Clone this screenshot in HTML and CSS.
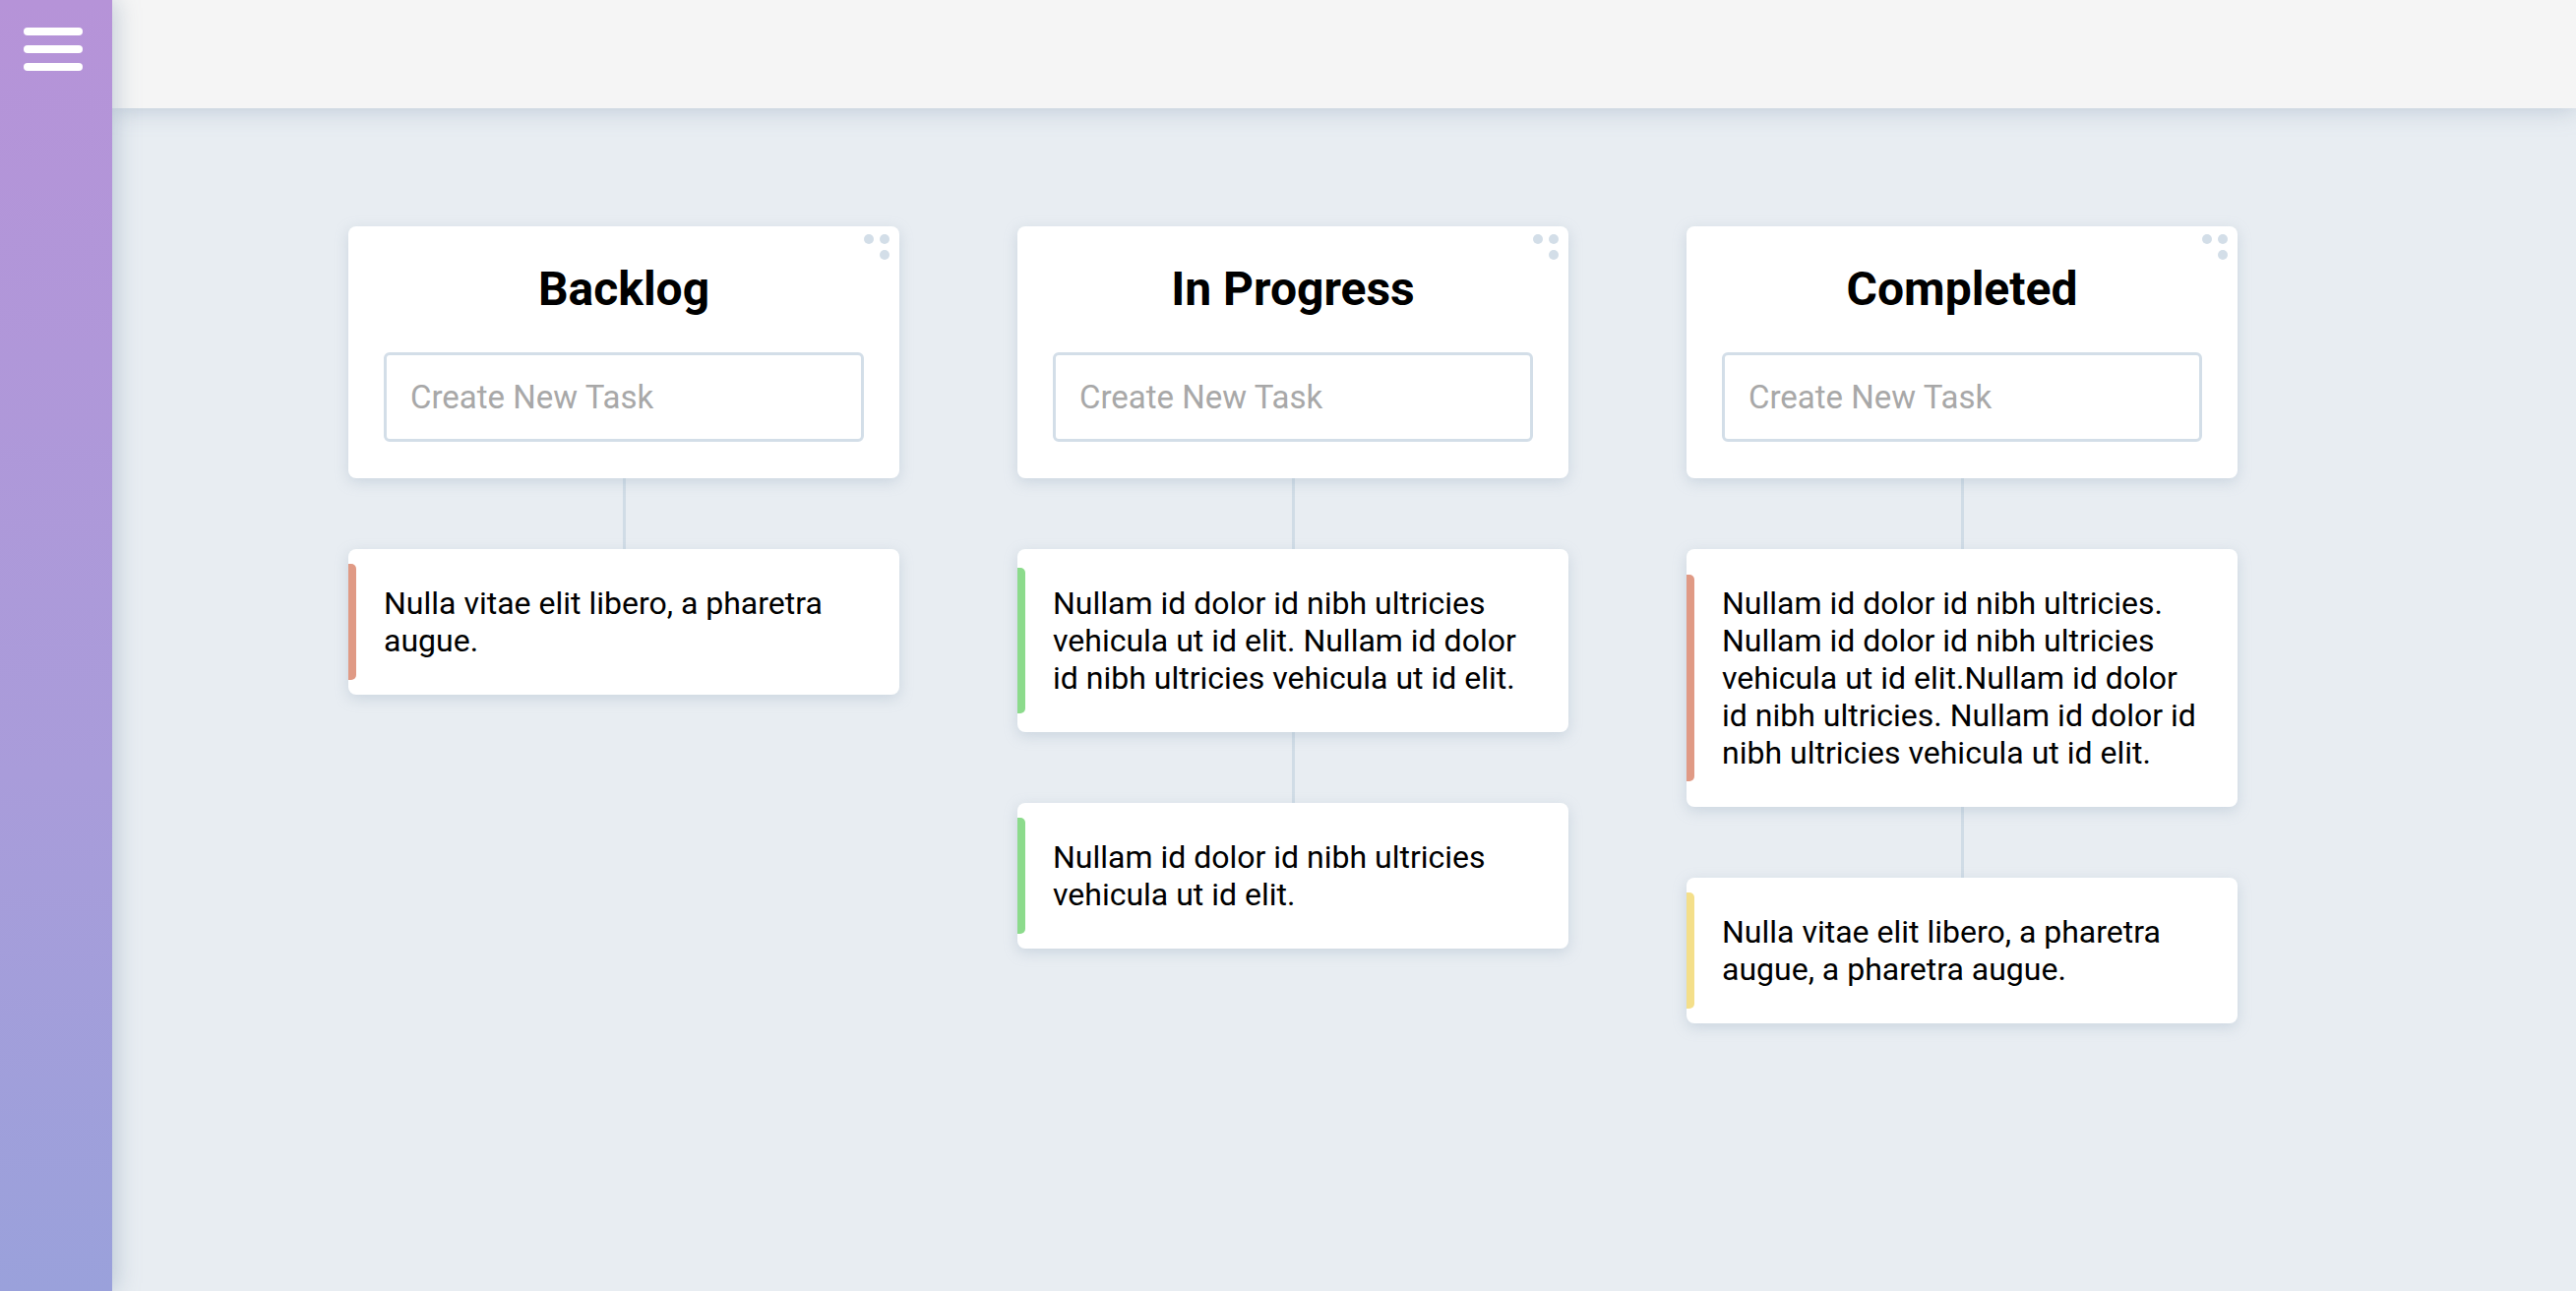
FILE: index.html
```html
<!DOCTYPE html>
<html lang="en">
<head>
<meta charset="utf-8">
<title>Kanban</title>
<link rel="stylesheet" href="styles.css">
</head>
<body>
<div class="app">
  <aside class="sidebar">
    <button class="menu" aria-label="Menu">
      <span class="bar"></span>
      <span class="bar"></span>
      <span class="bar"></span>
    </button>
  </aside>
  <main class="main">
    <header class="topbar"></header>
    <section class="board">
      <div class="column">
        <div class="col-head">
          <svg class="grip" width="26" height="26" viewBox="0 0 26 26"><circle cx="5" cy="5" r="5"/><circle cx="21" cy="5" r="5"/><circle cx="21" cy="21" r="5"/></svg>
          <h2 class="col-title">Backlog</h2>
          <input class="new-task" type="text" placeholder="Create New Task">
        </div>
        <div class="link"></div>
        <div class="task task-red">Nulla vitae elit libero, a pharetra augue.</div>
      </div>
      <div class="column">
        <div class="col-head">
          <svg class="grip" width="26" height="26" viewBox="0 0 26 26"><circle cx="5" cy="5" r="5"/><circle cx="21" cy="5" r="5"/><circle cx="21" cy="21" r="5"/></svg>
          <h2 class="col-title">In Progress</h2>
          <input class="new-task" type="text" placeholder="Create New Task">
        </div>
        <div class="link"></div>
        <div class="task task-green">Nullam id dolor id nibh ultricies vehicula ut id elit. Nullam id dolor id nibh ultricies vehicula ut id elit.</div>
        <div class="link"></div>
        <div class="task task-green">Nullam id dolor id nibh ultricies vehicula ut id elit.</div>
      </div>
      <div class="column">
        <div class="col-head">
          <svg class="grip" width="26" height="26" viewBox="0 0 26 26"><circle cx="5" cy="5" r="5"/><circle cx="21" cy="5" r="5"/><circle cx="21" cy="21" r="5"/></svg>
          <h2 class="col-title">Completed</h2>
          <input class="new-task" type="text" placeholder="Create New Task">
        </div>
        <div class="link"></div>
        <div class="task task-red">Nullam id dolor id nibh ultricies. Nullam id dolor id nibh ultricies vehicula ut id elit.Nullam id dolor id nibh ultricies. Nullam id dolor id nibh ultricies vehicula ut id elit.</div>
        <div class="link"></div>
        <div class="task task-yellow">Nulla vitae elit libero, a pharetra augue, a pharetra augue.</div>
      </div>
    </section>
  </main>
</div>
</body>
</html>
```

FILE: styles.css
```css
* { box-sizing: border-box; }

html, body {
  margin: 0;
  padding: 0;
  height: 100%;
}

body {
  font-family: Roboto, "Liberation Sans", Arial, sans-serif;
  color: #000;
  background: #e8edf2;
  overflow: hidden;
}

.app {
  display: flex;
  height: 1312px;
}

.sidebar {
  width: 114px;
  flex: 0 0 114px;
  background: linear-gradient(180deg, #b693d8 0%, #a99cda 60%, #9aa1db 100%);
  position: relative;
  z-index: 3;
  box-shadow: 4px 0 22px rgba(120, 145, 170, 0.4);
  padding-top: 28px;
}

.menu {
  display: flex;
  flex-direction: column;
  gap: 10px;
  margin-left: 24px;
  padding: 0;
  border: 0;
  background: none;
}

.bar {
  display: block;
  width: 60px;
  height: 8px;
  border-radius: 4px;
  background: #fff;
}

.main {
  flex: 1;
  display: flex;
  flex-direction: column;
  min-width: 0;
}

.topbar {
  height: 110px;
  flex: 0 0 110px;
  background: #f5f5f5;
  position: relative;
  z-index: 2;
  box-shadow: 0 2px 22px rgba(120, 145, 170, 0.38);
}

.board {
  display: flex;
  align-items: flex-start;
  gap: 120px;
  padding: 120px 0 0 240px;
}

.column {
  width: 560px;
  display: flex;
  flex-direction: column;
  align-items: center;
}

.col-head {
  position: relative;
  width: 100%;
  background: #fff;
  border-radius: 8px;
  padding: 36px 36px 37px;
  box-shadow: 0 4px 14px rgba(150, 170, 190, 0.35);
  display: flex;
  flex-direction: column;
  align-items: center;
}

.grip {
  position: absolute;
  top: 8px;
  right: 10px;
  fill: #d3dee8;
}

.col-title {
  margin: 0 0 36px;
  font-size: 48px;
  font-weight: 700;
  line-height: 56px;
}

.new-task {
  width: 100%;
  height: 91px;
  border: 3px solid #d3dee8;
  border-radius: 6px;
  padding: 0 24px;
  font-family: Roboto, "Liberation Sans", Arial, sans-serif;
  font-size: 33px;
  color: #333;
  background: #fff;
  outline: none;
}

.new-task::placeholder {
  color: #a8a8a8;
}

.link {
  width: 3px;
  height: 72px;
  background: #d0dce6;
}

.task {
  position: relative;
  width: 100%;
  background: #fff;
  border-radius: 8px;
  padding: 36px;
  font-size: 32px;
  line-height: 38px;
  box-shadow: 0 4px 14px rgba(150, 170, 190, 0.35);
}

.task::before {
  content: "";
  position: absolute;
  left: 0;
  top: 10%;
  height: 80%;
  width: 8px;
  border-radius: 0 5px 5px 0;
}

.task-red::before { background: #e09a85; }
.task-green::before { background: #8cdb8c; }
.task-yellow::before { background: #f4df8a; }
```
